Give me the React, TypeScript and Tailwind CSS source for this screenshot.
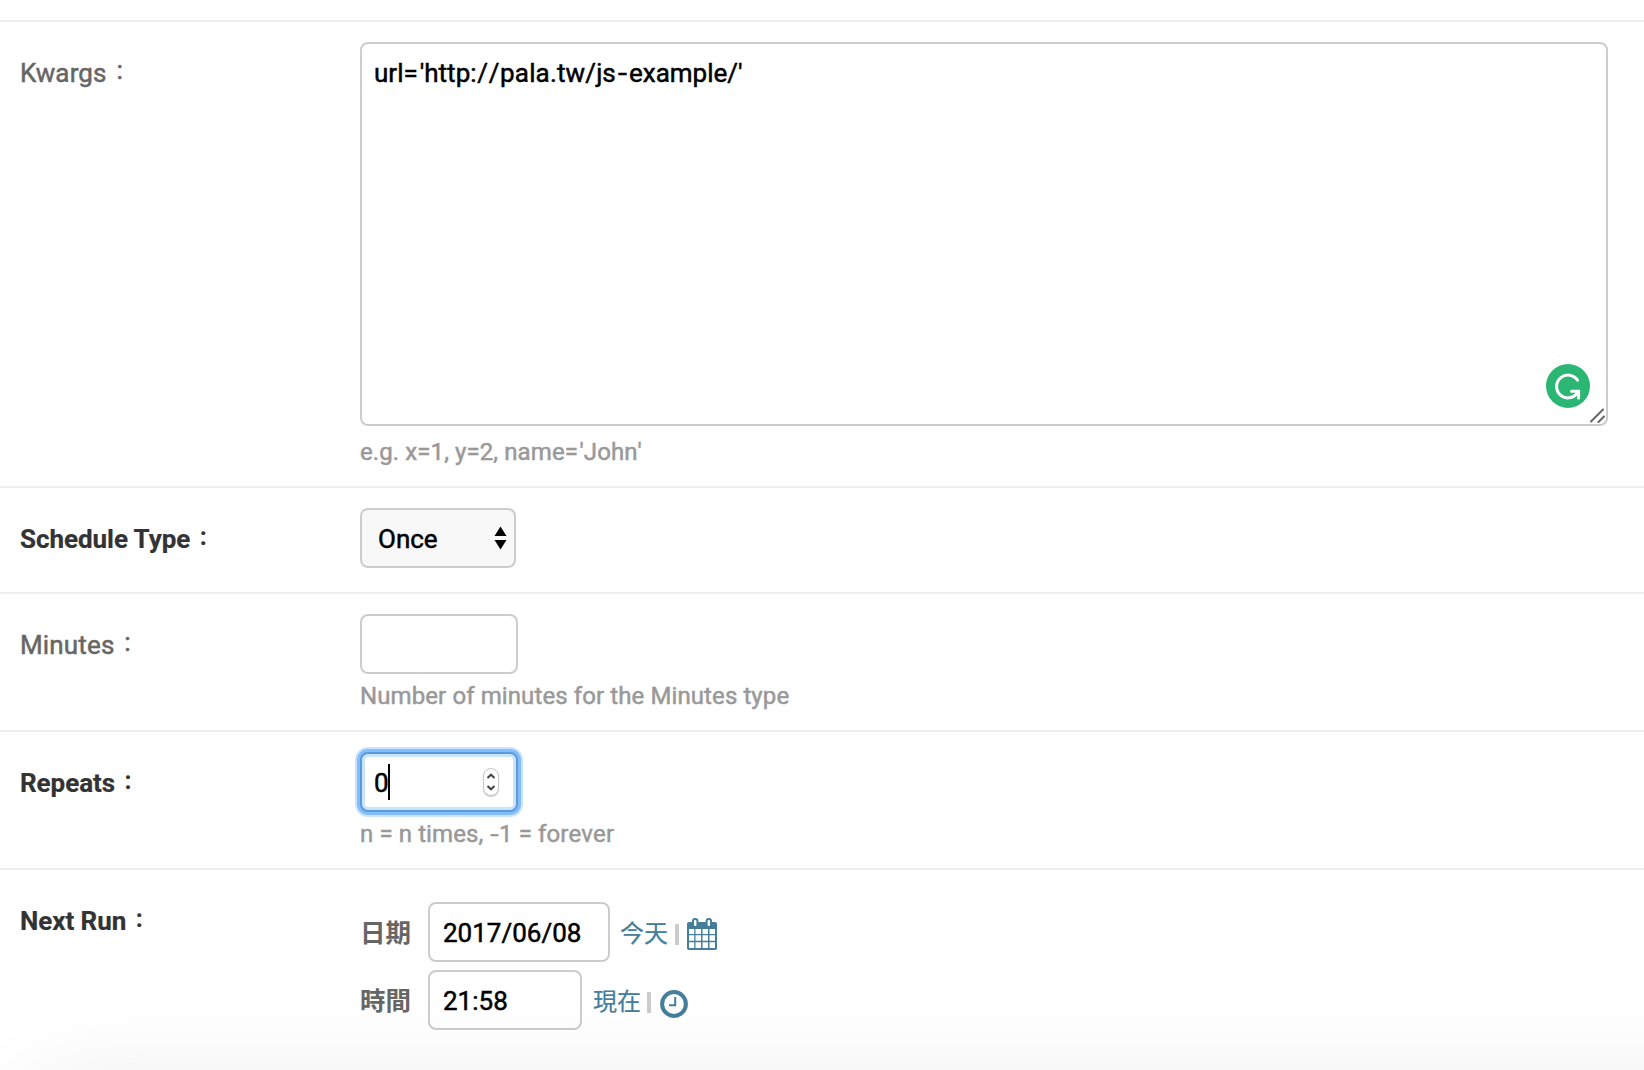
import type { ReactNode } from 'react';

const box = 'rounded-[8px] border-2 border-[#ccc] bg-white text-black h-[60px] pt-[2px] pl-[13px] flex items-center whitespace-nowrap';

function Row({
  label,
  required,
  height,
  last,
  children,
}: {
  label: string;
  required?: boolean;
  height: string;
  last?: boolean;
  children: ReactNode;
}) {
  return (
    <div className={`flex shrink-0 pl-[20px] pt-[20px] ${height} ${last ? '' : 'border-b-2 border-[#eee]'}`}>
      <div
        className={`w-[340px] shrink-0 pt-[16px] leading-[30px] [font-kerning:normal] ${
          required ? 'font-bold tracking-[-0.05px] text-[#333] [-webkit-text-stroke:0.2px]' : 'tracking-[0.15px] text-[#666]'
        }`}
      >
        {label}
        <span className="relative -top-[2px] ml-[3px] font-['Noto_Sans_CJK_TC',sans-serif] text-[20px] leading-none">：</span>
      </div>
      <div className="flex flex-col items-start">{children}</div>
    </div>
  );
}

function Help({ gap = 'mt-[7px]', children }: { gap?: string; children: ReactNode }) {
  return <p className={`${gap} tracking-[0.1px] whitespace-nowrap text-[24px] leading-[30px] text-[#999]`}>{children}</p>;
}

function Dash() {
  return <span className="mx-[1.5px] inline-block scale-x-125">-</span>;
}

function GrammarBadge() {
  return (
    <svg className="absolute right-[16px] bottom-[16px]" width="44" height="44" viewBox="0 0 44 44" fill="none">
      <circle cx="22" cy="22" r="22" fill="#2bb673" />
      <path
        d="M31.5 16.2A11.4 11.4 0 1 0 31.2 29.2M25.5 27.2H32.6V34"
        stroke="#fff"
        strokeWidth="3"
        strokeLinecap="round"
      />
    </svg>
  );
}

function CalendarIcon() {
  return (
    <svg width="30" height="32" viewBox="0 0 30 32" fill="none">
      <path d="M0 6a2 2 0 0 1 2-2h26a2 2 0 0 1 2 2v24a2 2 0 0 1-2 2H2a2 2 0 0 1-2-2z" fill="#447e9b" />
      <g fill="#fff">
        <path d="M2 11h5.200v5H2zM8.500 11h5.500v5H8.500zM15.500 11h5.500v5H15.500zM22.500 11h5.500v5H22.500z" />
        <path d="M2 17.200h5.200v5.600H2zM8.500 17.200h5.500v5.600H8.500zM15.500 17.200h5.500v5.600H15.500zM22.500 17.200h5.500v5.600H22.500z" />
        <path d="M2 24.200h5.200v5.800H2zM8.500 24.200h5.500v5.800H8.500zM15.500 24.200h5.500v5.800H15.500zM22.500 24.200h5.500v5.800H22.500z" />
      </g>
      <rect x="6" y="1" width="4.400" height="8" rx="2" fill="#fff" stroke="#447e9b" strokeWidth="2" />
      <rect x="19.600" y="1" width="4.400" height="8" rx="2" fill="#fff" stroke="#447e9b" strokeWidth="2" />
    </svg>
  );
}

function ClockIcon() {
  return (
    <svg width="28" height="28" viewBox="0 0 28 28" fill="none" stroke="#447e9b">
      <circle cx="14" cy="14" r="11.9" strokeWidth="4" />
      <path d="M15.2 7v8.2H9" strokeWidth="2" />
    </svg>
  );
}

export default function App() {
  return (
    <main className="relative flex h-[1070px] w-[1644px] flex-col overflow-hidden bg-white font-[Roboto,'Noto_Sans_CJK_TC',sans-serif] text-[26px] [font-kerning:none] [-webkit-text-stroke:0.5px]">
      <div className="h-[22px] shrink-0 border-b-2 border-[#eee]" />

      <Row label="Kwargs" height="h-[466px]">
        <div className="relative h-[384px] w-[1248px] rounded-[8px] border-2 border-[#ccc] bg-white px-[12px] pt-[14px] leading-[30px] text-black">
          url<span className="mr-[2px]">=</span>'http
          <span className="tracking-[0.7px]">://</span>
          <span className="tracking-[0.15px]">pala.tw/</span>js
          <span className="mx-[3px] inline-block scale-x-125">-</span>example/'
          <GrammarBadge />
          <svg className="absolute right-[1px] bottom-[1px]" width="15" height="15" viewBox="0 0 15 15" fill="none" stroke="#666" strokeWidth="2">
            <path d="M1 13.5L13 1.5M8.5 14L14 8.5" strokeLinecap="round" />
          </svg>
        </div>
        <Help gap="mt-[11px]">
          e.g. x=1, y=2, name<span className="mr-[1.5px]">=</span>'John'
        </Help>
      </Row>

      <Row label="Schedule Type" required height="h-[106px]">
        <div className="flex h-[60px] w-[156px] items-center justify-between rounded-[8px] border-2 border-[#ccc] bg-[#f8f8f8] pr-[7px] pl-[16px] text-black">
          <span className="pt-[2px]">Once</span>
          <svg width="13" height="24" viewBox="0 0 13 24">
            <path d="M6.5 0.5L12.5 10H0.5zM6.5 23.5L12.5 14H0.5z" />
          </svg>
        </div>
      </Row>

      <Row label="Minutes" height="h-[138px]">
        <div className={`${box} w-[158px]`} />
        <Help>Number of minutes for the Minutes type</Help>
      </Row>

      <Row label="Repeats" required height="h-[138px]">
        <div className="flex h-[60px] w-[158px] items-center rounded-[8px] border-2 border-[#5c9ad9] bg-white px-[12px] text-black shadow-[0_0_0_3px_#83bdfc,0_0_0_5px_#cbe4fe,inset_0_0_0_3px_#cbe4fe]">
          <span className="pt-[2px]">0</span>
          <span className="-ml-px h-[36px] w-[2px] shrink-0 bg-black" />
          <span className="mr-[5px] ml-auto flex h-[28px] w-[16px] items-center justify-center rounded-full border border-[#c8c8c8] bg-white shadow-[0_1px_1px_#ccc]">
            <svg width="10" height="18" viewBox="0 0 10 18" fill="none" stroke="#444" strokeWidth="2" className="shrink-0">
              <path d="M1.5 5L5 1.7L8.500 5M1.500 13L5 16.300L8.500 13" />
            </svg>
          </span>
        </div>
        <Help>
          n = n times, <Dash />1 = forever
        </Help>
      </Row>

      <Row label="Next Run" required last height="h-[200px]">
        <div className="mt-[12px] flex h-[60px] items-center">
          <span className="w-[68px] pt-[3px] text-[25.5px] leading-none font-bold text-[#666] [-webkit-text-stroke:0px]">日期</span>
          <div className={`${box} w-[182px]`}>2017/06/08</div>
          <span className="ml-[10px] pt-[3px] text-[24px] leading-none text-[#447e9b] [-webkit-text-stroke:0.2px]">今天</span>
          <span className="mt-[4px] ml-[7px] h-[21px] w-[4px] bg-[#ccc]" />
          <span className="mt-[4px] ml-[8px]">
            <CalendarIcon />
          </span>
        </div>
        <div className="mt-[8px] flex h-[60px] items-center">
          <span className="w-[68px] pt-[3px] text-[25.5px] leading-none font-bold text-[#666] [-webkit-text-stroke:0px]">時間</span>
          <div className={`${box} w-[154px]`}>21:58</div>
          <span className="ml-[11px] pt-[3px] text-[24px] leading-none text-[#447e9b] [-webkit-text-stroke:0.2px]">現在</span>
          <span className="mt-[4px] ml-[6px] h-[21px] w-[4px] bg-[#ccc]" />
          <span className="mt-[8px] ml-[9px]">
            <ClockIcon />
          </span>
        </div>
      </Row>

      <div className="pointer-events-none absolute top-[1108px] left-[60px] h-[60px] w-[1700px] shadow-[0_0_100px_20px_rgba(0,0,0,0.09)]" />
    </main>
  );
}
